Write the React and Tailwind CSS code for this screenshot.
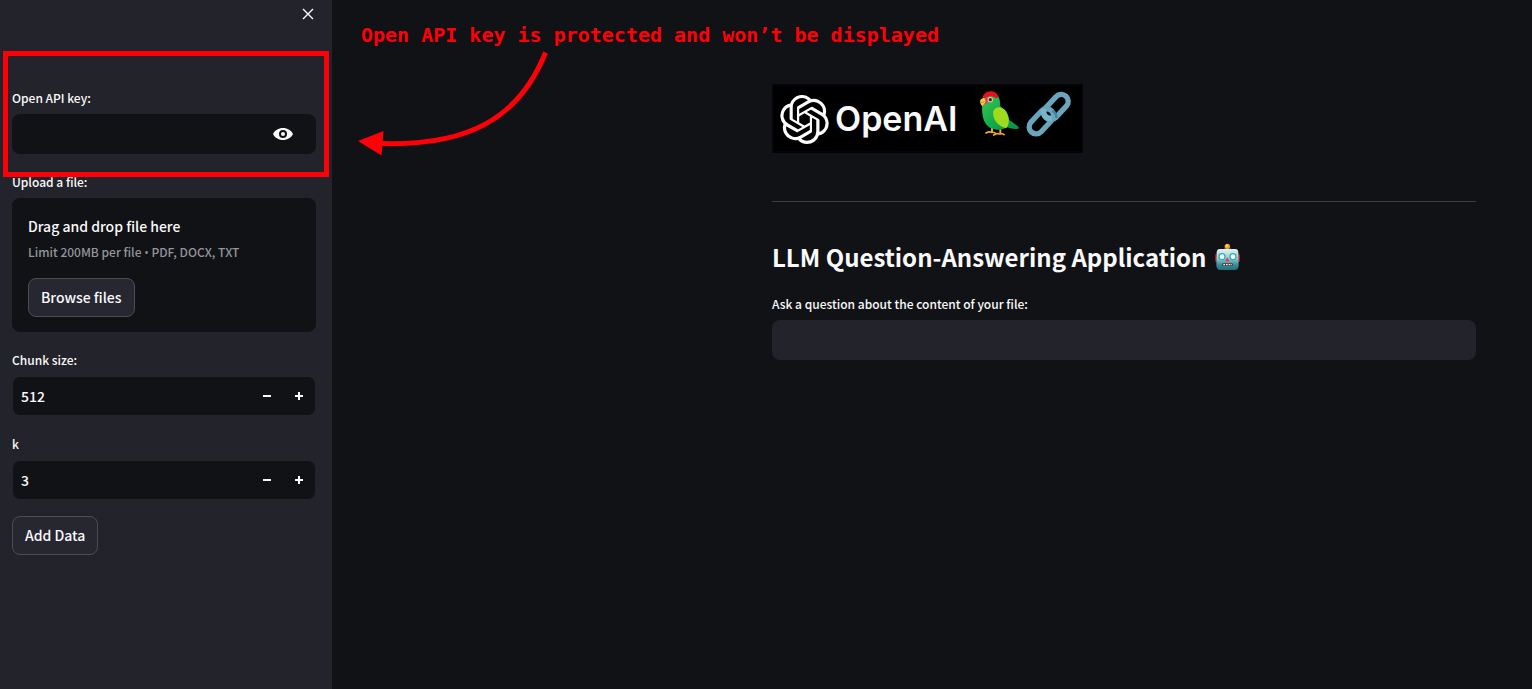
import { useState } from "react";
import { SiOpenai } from "react-icons/si";

function Parrot() {
  return (
    <svg width="43" height="48" viewBox="24 18 129 144" role="img" aria-label="Parrot">
      <defs>
        <linearGradient id="parrot-body" x1="0" y1="0" x2="1" y2="1">
          <stop offset="0" stopColor="#4cc552" />
          <stop offset="0.5" stopColor="#13ad4b" />
          <stop offset="1" stopColor="#078f4c" />
        </linearGradient>
      </defs>
      <path d="M66 132v14M91 136v15" stroke="#f5a623" strokeWidth="6" />
      <path d="M48 147q9-6 17-2q9-1 13 4M71 153q10-6 19-3q8-2 12 2" fill="none" stroke="#f5a81c" strokeWidth="5" strokeLinecap="round" />
      <path d="M38 52C34 80 36 112 54 127C66 138 92 142 112 130C124 134 138 137 147 133C148 130 136 120 118 108C116 84 98 74 90 66C92 44 84 27 64 25C48 24 40 38 38 52Z" fill="url(#parrot-body)" />
      <path d="M70 82C66 100 78 124 108 133C120 122 118 100 108 82C98 68 76 64 70 82Z" fill="#a0da1d" />
      <path d="M38 41C40 28 52 22 64 22C76 23 84 30 85 40C80 45 72 38 62 37C54 36 46 46 38 41Z" fill="#e3121c" />
      <path d="M44 42C50 38 54 44 53 54L46 62Z" fill="#ee2b67" />
      <path d="M43 42C33 42 28 50 31 57C33 62 36 66 38 67C40 58 47 58 47 50Z" fill="#fac832" />
      <path d="M31 54q6 3 12-1" fill="none" stroke="#b87911" strokeWidth="2" />
      <circle cx="61" cy="47" r="8" fill="#d9c9b0" />
      <circle cx="61" cy="47" r="5" fill="#4b2318" />
    </svg>
  );
}

function Chain() {
  return (
    <svg width="47" height="48" viewBox="165 18 141 144" role="img" aria-label="Link">
      <g fill="none" strokeWidth="16">
        <rect x="-44" y="-21" width="88" height="42" rx="21" transform="translate(258 69) rotate(-47)" stroke="#6ba5bd" />
        <rect x="-44" y="-21" width="88" height="42" rx="21" transform="translate(214 112) rotate(-47)" stroke="#6ba5bd" />
        <path d="M221 74C216 92 228 104 246 103" stroke="#79b5ca" />
        <path d="M247 80q14 8 12 22" stroke="#3d869f" strokeWidth="7" />
      </g>
    </svg>
  );
}

function Robot() {
  return (
    <svg width="27" height="29" viewBox="45 21 81 87" role="img" aria-label="Robot">
      <defs>
        <linearGradient id="robot-face" x1="0" y1="0" x2="0" y2="1">
          <stop offset="0" stopColor="#e2f3f1" />
          <stop offset="0.45" stopColor="#9fc9ca" />
          <stop offset="0.75" stopColor="#398d98" />
          <stop offset="1" stopColor="#1f6f7c" />
        </linearGradient>
      </defs>
      <rect x="48" y="54" width="9" height="24" rx="4" fill="#a51f25" />
      <rect x="114" y="54" width="9" height="24" rx="4" fill="#a51f25" />
      <rect x="76" y="34" width="19" height="9" rx="3" fill="#5b4770" />
      <circle cx="85" cy="31" r="8" fill="#f1a51e" />
      <circle cx="84" cy="29" r="3" fill="#ffe36b" />
      <path d="M62 39H109Q117 39 118 49L119 88Q119 102 107 102H64Q52 102 52 88L53 49Q54 39 62 39Z" fill="url(#robot-face)" />
      <circle cx="69" cy="62" r="9" fill="#fff" stroke="#20b3cc" strokeWidth="4" />
      <circle cx="102" cy="62" r="9" fill="#fff" stroke="#20b3cc" strokeWidth="4" />
      <path d="M85 64l7 12H78Z" fill="#e2403c" />
      <rect x="69" y="82" width="33" height="8" rx="4" fill="#4b3a42" />
      <path d="M73 86H99" stroke="#f5f5f5" strokeWidth="4" strokeDasharray="5 3" />
    </svg>
  );
}

function Eye() {
  return (
    <svg width="20" height="12" viewBox="0 0 20 12" aria-hidden="true">
      <path fillRule="evenodd" fill="#fafafa" d="M10 0C5.5 0 1.7 2.5 0 6C1.7 9.500 5.500 12 10 12S18.300 9.500 20 6C18.300 2.500 14.500 0 10 0ZM10 10A4 4 0 1 1 10 2A4 4 0 0 1 10 10ZM10 8A2 2 0 1 0 10 4A2 2 0 0 0 10 8Z" />
    </svg>
  );
}

const labelClass = "block h-7 text-[12px] leading-6 font-medium";
const buttonClass =
  "h-[39px] rounded-lg border border-[#4b4c54] bg-[#272731] px-3 pb-0.5 text-[14px] leading-6 font-medium hover:border-[#ff4b4b]";

function NumberField({ id, label, initial }) {
  const [value, setValue] = useState(initial);
  return (
    <div>
      <label htmlFor={id} className={labelClass}>{label}</label>
      <div className="flex h-10 items-center overflow-hidden rounded-lg border border-[#23232b] bg-[#111216]">
        <input
          id={id}
          type="text"
          inputMode="numeric"
          value={value}
          onChange={(e) => setValue(Number(e.target.value) || 0)}
          className="h-full min-w-0 flex-1 bg-transparent pl-2 text-[14px] font-medium outline-none"
        />
        <button type="button" aria-label={`Decrease ${label}`} onClick={() => setValue(value - 1)} className="flex h-full w-8 items-center justify-center">
          <svg width="8" height="8" viewBox="0 0 8 8"><path d="M0 3h8v2H0z" fill="#fafafa" /></svg>
        </button>
        <button type="button" aria-label={`Increase ${label}`} onClick={() => setValue(value + 1)} className="flex h-full w-8 items-center justify-center">
          <svg width="8" height="8" viewBox="0 0 8 8"><path d="M0 3h3V0h2v3h3v2H5v3H3V5H0z" fill="#fafafa" /></svg>
        </button>
      </div>
    </div>
  );
}

function Sidebar() {
  const [shown, setShown] = useState(false);
  return (
    <aside className="relative w-[332px] shrink-0 bg-[#23232b] pr-4 pl-3">
      <div className="flex h-7 items-center justify-end">
        <button type="button" aria-label="Close sidebar" className="flex h-4 w-4 items-center justify-center">
          <svg width="12" height="12" viewBox="0 0 12 12"><path d="M1 1l10 10M11 1L1 11" stroke="#fafafa" strokeWidth="1.4" /></svg>
        </button>
      </div>
      <form className="flex flex-col gap-4 pt-[58px]" onSubmit={(e) => e.preventDefault()}>
        <div>
          <label htmlFor="key" className={labelClass}>Open API key:</label>
          <div className="flex h-10 items-center rounded-lg bg-[#111216] pr-[23px]">
            <input id="key" type={shown ? "text" : "password"} className="h-full min-w-0 flex-1 bg-transparent pl-2 text-[14px] outline-none" />
            <button type="button" aria-label="Show key" onClick={() => setShown(!shown)}><Eye /></button>
          </div>
        </div>
        <div>
          <span className={labelClass}>Upload a file:</span>
          <section className="h-[134px] rounded-lg bg-[#111216] p-4">
            <div className="text-[14px] leading-6 font-medium">Drag and drop file here</div>
            <div className="mt-1 text-[12px] leading-5 font-medium text-[#94959a]">
              Limit 200MB per file <span className="font-['Open_Sans',sans-serif]">•</span> PDF, DOCX, TXT
            </div>
            <button type="button" className={`${buttonClass} mt-[15px]`}>Browse files</button>
          </section>
        </div>
        <NumberField id="chunk" label="Chunk size:" initial={512} />
        <NumberField id="k" label="k" initial={3} />
        <div>
          <button type="submit" className={buttonClass}>Add Data</button>
        </div>
      </form>
      <div className="pointer-events-none absolute top-[51px] right-[3px] left-[3px] h-[126px] border-5 border-[#ff0008]" />
    </aside>
  );
}

export default function App() {
  return (
    <div className="flex min-h-screen bg-[#111216] font-['Noto_Sans_CJK_SC',sans-serif] text-[#fafafa]">
      <Sidebar />
      <main className="relative min-w-0 flex-1 pt-[84px] pr-14 pl-7">
        <div className="pointer-events-none absolute top-[21px] left-[26px] text-[#ff0008]">
          <p className="pl-[3px] font-['DejaVu_Sans_Mono',monospace] text-[20px] leading-7 font-bold whitespace-nowrap">Open API key is protected and won’t be displayed</p>
          <svg width="192" height="108" viewBox="358 49 192 108" aria-hidden="true">
            <path d="M545.500 52.500C519 119 467 146 382 143.500" fill="none" stroke="currentColor" strokeWidth="5" />
            <path d="M358 141L383.500 131L381.500 155.500Z" fill="currentColor" />
          </svg>
        </div>
        <div className="ml-auto max-w-[704px]">
          <div className="flex h-[69px] w-[311px] items-start border-2 border-[#050509] bg-black pl-1.5">
            <SiOpenai size={49} className="mt-[9px]" aria-hidden="true" />
            <span className="mt-[13px] ml-1.5 w-[143px] font-['Inter',sans-serif] text-[34px] leading-10 font-semibold">OpenAI</span>
            <div className="mt-1 flex gap-1">
              <Parrot />
              <Chain />
            </div>
          </div>
          <hr className="mt-12 border-[#3d3e43]" />
          <h1 className="mt-[37px] flex items-center gap-2 text-[24px] leading-9 font-bold">
            LLM Question-Answering Application <Robot />
          </h1>
          <label htmlFor="question" className="mt-[17px] block h-7 text-[12px] leading-6 font-medium">Ask a question about the content of your file:</label>
          <input id="question" type="text" className="block h-10 w-full rounded-lg bg-[#23232b] px-2 text-[14px] outline-none" />
        </div>
      </main>
    </div>
  );
}
